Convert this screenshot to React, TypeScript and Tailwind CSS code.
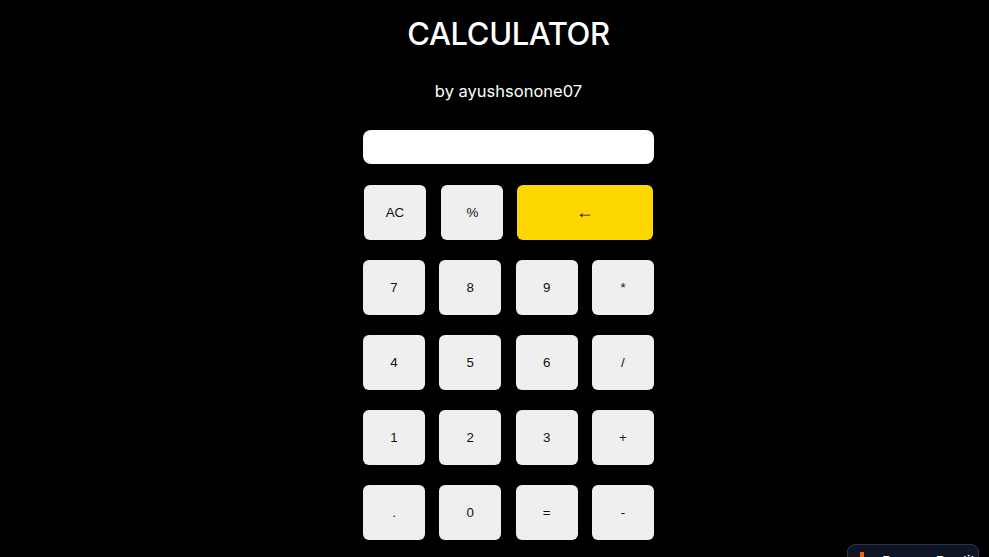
const keys = ['7', '8', '9', '*', '4', '5', '6', '/', '1', '2', '3', '+', '.', '0', '=', '-'];

const btn =
  'h-[55px] w-[62px] rounded-[6px] bg-[#efefef] text-[13.33px] text-[#111] flex items-center justify-center';

export default function App() {
  return (
    <main
      className="relative min-h-[557px] w-full overflow-hidden bg-black pl-[28px] text-white flex flex-col items-center"
      style={{ fontFamily: '"Liberation Sans", Arial, sans-serif' }}
    >
      <h1 className="mt-[13px] text-[31px] leading-[42px] font-medium tracking-[-0.4px] font-['Inter',sans-serif]">
        CALCULATOR
      </h1>
      <p className="mt-[26px] text-[16.5px] leading-[20px] font-['Inter',sans-serif]">by ayushsonone07</p>

      <div className="mt-[29px] w-[291px]">
        <input type="text" className="block h-[34px] w-full rounded-[8px] bg-white outline-none" />

        <div className="mt-[21px] grid grid-cols-4 gap-x-[14.3px] gap-y-[20px]">
          <button className={btn + ' ml-[1px]'}>AC</button>
          <button className={btn + ' ml-[2px]'}>%</button>
          <button className="col-span-2 ml-[1px] h-[55px] w-[136px] rounded-[6px] bg-[#ffd700] text-[18px] text-[#111] flex items-center justify-center">
            ←
          </button>
          {keys.map(k => (
            <button key={k} className={btn}>
              {k}
            </button>
          ))}
        </div>
      </div>

      {/* replit badge, mostly below the fold */}
      <div className="absolute left-[847px] top-[544px] flex h-[30px] w-[132px] items-start gap-[18px] rounded-[8px] border border-[#2b3245] bg-[#0e1525] pl-[12px] pt-[6px]">
        <span className="mt-[1px] h-[10px] w-[4px] bg-[#f26207]" />
        <span className="mt-[3px] text-[15px] leading-[16px] text-white font-['Inter',sans-serif]">Run on Replit</span>
      </div>
    </main>
  );
}
